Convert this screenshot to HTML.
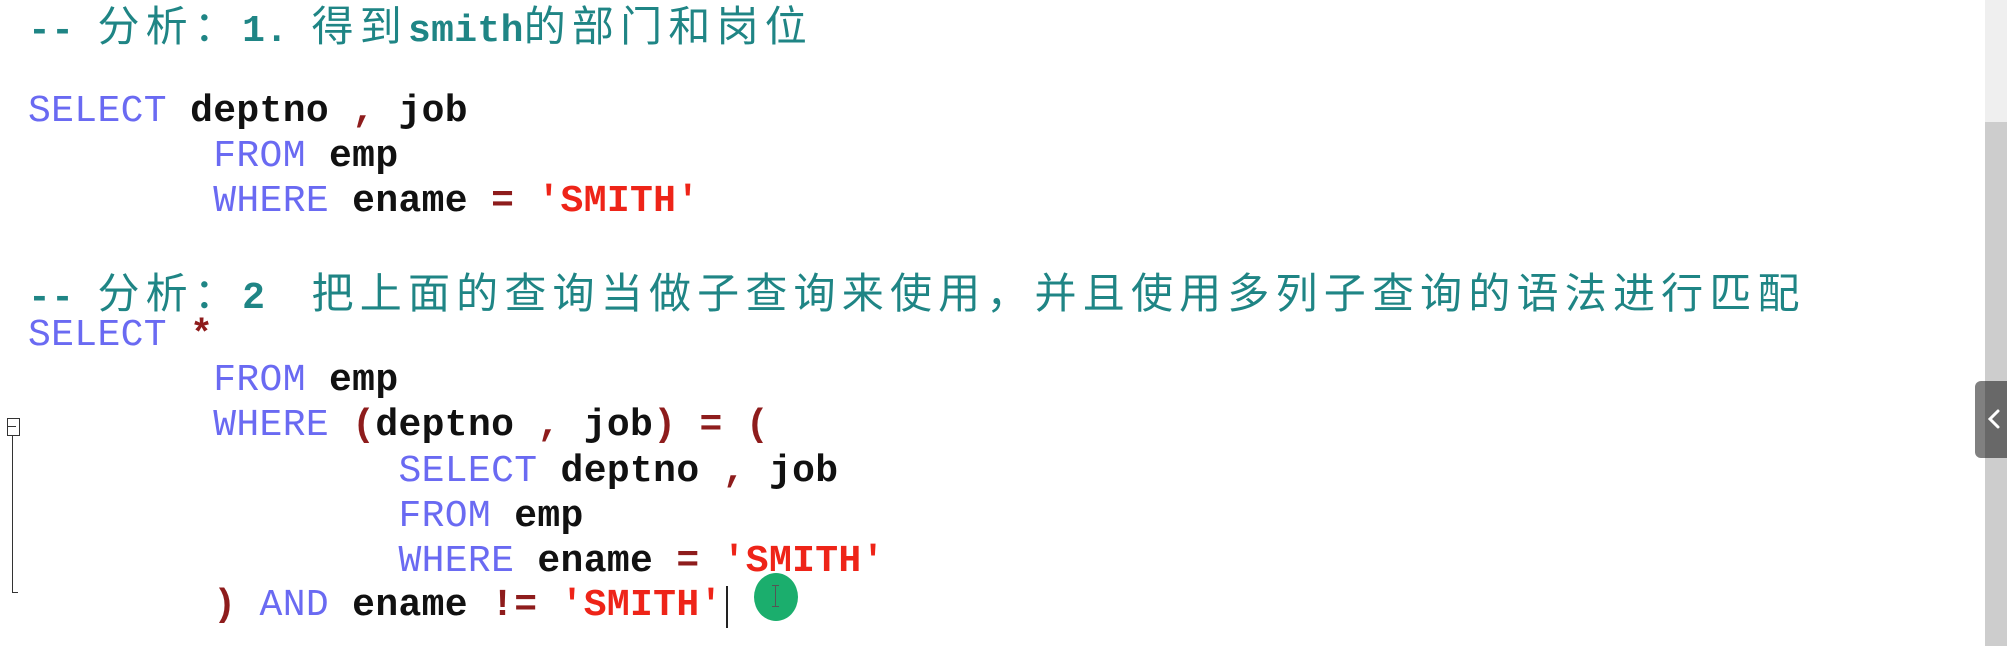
<!DOCTYPE html>
<html><head><meta charset="utf-8">
<style>
html,body{margin:0;padding:0;width:2007px;height:646px;overflow:hidden;background:#fff;}
.l{position:absolute;left:28px;height:45px;line-height:45px;white-space:pre;font-family:"Liberation Mono","Noto Sans CJK SC",monospace;font-size:38px;font-weight:bold;color:#111;letter-spacing:0.35px;}
.k{color:#6a6af2;font-weight:normal;}
.s{color:#ee2418;}
.o{color:#8e1c1c;}
.c{color:#1f8585;font-weight:bold;}
.z{font-family:"Noto Sans CJK SC",sans-serif;font-size:42px;letter-spacing:6.2px;font-weight:normal;color:#1f8585;}
</style></head><body>
<div class="l" style="top:1px"><span class="c">-- </span><span class="z">分析：</span><span class="c">1. </span><span class="z">得到</span><span class="c">smith</span><span class="z">的部门和岗位</span></div>
<div class="l" style="top:89px"><span class="k">SELECT</span> deptno <span class="o">,</span> job</div>
<div class="l" style="top:134px">        <span class="k">FROM</span> emp</div>
<div class="l" style="top:179px">        <span class="k">WHERE</span> ename <span class="o">=</span> <span class="s">'SMITH'</span></div>
<div class="l" style="top:268px"><span class="c">-- </span><span class="z">分析：</span><span class="c">2  </span><span class="z">把上面的查询当做子查询来使用，并且使用多列子查询的语法进行匹配</span></div>
<div class="l" style="top:313px"><span class="k">SELECT</span> <span class="o">*</span></div>
<div class="l" style="top:358px">        <span class="k">FROM</span> emp</div>
<div class="l" style="top:403px">        <span class="k">WHERE</span> <span class="o">(</span>deptno <span class="o">,</span> job<span class="o">)</span> <span class="o">=</span> <span class="o">(</span></div>
<div class="l" style="top:449px">                <span class="k">SELECT</span> deptno <span class="o">,</span> job</div>
<div class="l" style="top:494px">                <span class="k">FROM</span> emp</div>
<div class="l" style="top:539px">                <span class="k">WHERE</span> ename <span class="o">=</span> <span class="s">'SMITH'</span></div>
<div class="l" style="top:583px">        <span class="o">)</span> <span class="k">AND</span> ename <span class="o">!=</span> <span class="s">'SMITH'</span></div>
<!-- fold marker -->
<div style="position:absolute;left:7px;top:418px;width:11px;height:16px;border:1px solid #333;background:#fff"></div>
<div style="position:absolute;left:8px;top:426px;width:8px;height:1px;background:#333"></div>
<div style="position:absolute;left:12px;top:435px;width:1px;height:158px;background:#333"></div>
<div style="position:absolute;left:12px;top:592px;width:6px;height:1px;background:#333"></div>
<!-- cursor -->
<div style="position:absolute;left:726px;top:586px;width:2px;height:42px;background:#222"></div>
<div style="position:absolute;left:754px;top:573px;width:44px;height:48px;border-radius:50%;background:#1bae6d"></div>
<div style="position:absolute;left:775px;top:585px;width:1px;height:22px;background:#555"></div>
<div style="position:absolute;left:772px;top:585px;width:7px;height:1px;background:#555"></div>
<div style="position:absolute;left:772px;top:606px;width:7px;height:1px;background:#555"></div>
<!-- scrollbar -->
<div style="position:absolute;left:1985px;top:0;width:22px;height:122px;background:#efefef"></div>
<div style="position:absolute;left:1985px;top:122px;width:22px;height:524px;background:#cdcdcd"></div>
<div style="position:absolute;left:1975px;top:381px;width:32px;height:77px;border-radius:6px 0 0 6px;background:linear-gradient(90deg,#808080 0,#808080 10px,#686868 10px)"></div>
<svg style="position:absolute;left:1985px;top:407px" width="20" height="24" viewBox="0 0 20 24"><path d="M13 4 L5 12 L13 20" fill="none" stroke="#fff" stroke-width="3" stroke-linecap="round"/></svg>
</body></html>
